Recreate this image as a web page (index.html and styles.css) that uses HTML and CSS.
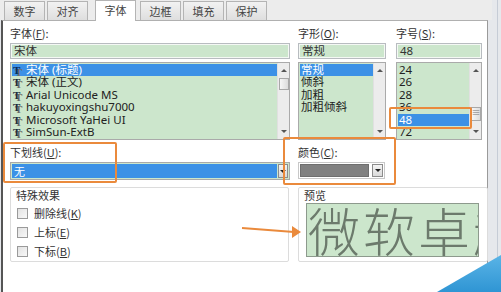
FILE: index.html
```html
<!DOCTYPE html>
<html lang="zh-CN">

<head>
    <meta charset="UTF-8">
    <title>设置单元格格式 - 字体</title>
    <link rel="stylesheet" href="styles.css">
</head>

<body>
    <div class="dialog">
        <nav class="tabs">
            <span class="tab">数字</span>
            <span class="tab">对齐</span>
            <span class="tab active">字体</span>
            <span class="tab">边框</span>
            <span class="tab">填充</span>
            <span class="tab">保护</span>
        </nav>

        <main class="panel">
            <section class="row-top">
                <div class="field">
                    <label class="label">字体(<u>F</u>):</label>
                    <div class="input">宋体</div>
                    <div class="list">
                        <ul class="items">
                            <li class="selected"><span class="tt">T</span>宋体 (标题)</li>
                            <li><span class="tt">T</span>宋体 (正文)</li>
                            <li><span class="tt">T</span>Arial Unicode MS</li>
                            <li><span class="tt">T</span>hakuyoxingshu7000</li>
                            <li><span class="tt">T</span>Microsoft YaHei UI</li>
                            <li><span class="tt">T</span>SimSun-ExtB</li>
                        </ul>
                        <div class="scroll">
                            <span class="arrow up"></span>
                            <span class="thumb thumb-font"></span>
                            <span class="arrow down"></span>
                        </div>
                    </div>
                </div>

                <div class="field">
                    <label class="label">字形(<u>O</u>):</label>
                    <div class="input">常规</div>
                    <div class="list">
                        <ul class="items">
                            <li class="selected">常规</li>
                            <li>倾斜</li>
                            <li>加粗</li>
                            <li>加粗倾斜</li>
                        </ul>
                        <div class="scroll">
                            <span class="arrow up"></span>
                            <span class="arrow down"></span>
                        </div>
                    </div>
                </div>

                <div class="field">
                    <label class="label">字号(<u>S</u>):</label>
                    <div class="input">48</div>
                    <div class="list">
                        <ul class="items">
                            <li>24</li>
                            <li>26</li>
                            <li>28</li>
                            <li>36</li>
                            <li class="selected">48</li>
                            <li>72</li>
                        </ul>
                        <div class="scroll">
                            <span class="arrow up"></span>
                            <span class="thumb thumb-size">≡</span>
                            <span class="arrow down"></span>
                        </div>
                    </div>
                </div>
            </section>

            <section class="row-mid">
                <div class="field">
                    <label class="label">下划线(<u>U</u>):</label>
                    <div class="combo">
                        <span class="combo-value">无</span>
                        <span class="combo-btn"></span>
                    </div>
                </div>
                <div class="field">
                    <label class="label">颜色(<u>C</u>):</label>
                    <div class="combo color">
                        <span class="swatch"></span>
                        <span class="combo-btn"></span>
                    </div>
                </div>
            </section>

            <section class="row-bottom">
                <fieldset class="group effects">
                    <legend class="group-title">特殊效果</legend>
                    <label class="check"><span class="box"></span><span>删除线(<u>K</u>)</span></label>
                    <label class="check"><span class="box"></span><span>上标(<u>E</u>)</span></label>
                    <label class="check"><span class="box"></span><span>下标(<u>B</u>)</span></label>
                </fieldset>
                <fieldset class="group preview">
                    <legend class="group-title">预览</legend>
                    <div class="sample">微软卓越</div>
                </fieldset>
            </section>
        </main>

        <div class="edge"></div>

        <!-- annotations drawn over the screenshot -->
        <span class="mark mark-size"></span>
        <span class="mark mark-underline"></span>
        <span class="mark mark-color"></span>
        <svg class="pointer" width="70" height="20" viewBox="0 0 70 20">
            <line x1="2" y1="6" x2="54" y2="10" stroke="#ea8a3c" stroke-width="2" />
            <polygon points="52,4 61,10 52,16" fill="#ea8a3c" />
        </svg>
        <span class="corner"></span>
    </div>
</body>

</html>
```

FILE: styles.css
```css
body {
    margin: 0;
    width: 501px;
    height: 292px;
    overflow: hidden;
    background: #e6e8ec;
    color: #2b2b2b;
    font-family: "Noto Sans", "Noto Sans CJK SC", sans-serif;
    font-size: 11px;
}

u {
    text-decoration: underline;
}

.dialog {
    position: relative;
    width: 501px;
    height: 292px;
    display: flex;
    flex-direction: column;
}

/* tabs */
.tabs {
    display: flex;
    gap: 2px;
    height: 20px;
    padding-left: 4px;
    background: #ececec;
    width: 488px;
    align-items: flex-end;
}

.tab {
    width: 41px;
    height: 19px;
    box-sizing: border-box;
    border: 1px solid #b4b4b4;
    border-bottom: none;
    background: linear-gradient(#f2f2f2, #dedede);
    text-align: center;
    line-height: 18px;
    color: #444;
    font-family: "Noto Sans CJK SC", sans-serif;
    font-size: 11px;
}

.tab.active {
    background: #fff;
    height: 21px;
    margin: 0 2px -1px 5px;
    position: relative;
}

/* panel */
.panel {
    width: 487px;
    flex: 1;
    margin-left: 1px;
    background: #fff;
    border-top: 1px solid #b0b0b0;
    border-left: 2px solid #555;
    border-right: 1px solid #9a9a9a;
    padding: 4px 0 0 7px;
    box-sizing: border-box;
    display: flex;
    flex-direction: column;
}

.edge {
    position: absolute;
    top: 0;
    right: 3px;
    width: 1px;
    height: 292px;
    background: #c6ccd6;
}

.row-top {
    display: grid;
    grid-template-columns: 280px 88px 88px;
    column-gap: 8px;
}

.row-top .field:last-child {
    margin-left: 2px;
}

.label {
    display: block;
    height: 18px;
    line-height: 17px;
    font-family: "Noto Sans CJK SC", sans-serif;
    font-size: 11px;
    color: #333;
}

.input {
    height: 16px;
    box-sizing: border-box;
    border: 1px solid #b8bcc0;
    background: #cce6cc;
    box-shadow: inset 0 0 0 1px #f4f8f4;
    padding-left: 3px;
    line-height: 14px;
    font-family: "Noto Sans", "Noto Sans CJK SC", sans-serif;
    font-size: 11.5px;
    color: #333;
}

.list {
    margin-top: 3px;
    height: 78px;
    box-sizing: border-box;
    border: 1px solid #aaa;
    background: #cce6cc;
    display: flex;
}

.items {
    flex: 1;
    list-style: none;
    margin: 0;
    padding: 1px 0 0 1px;
    overflow: hidden;
}

.items li {
    height: 12.4px;
    line-height: 12.4px;
    padding-left: 1px;
    white-space: nowrap;
    color: #222;
    font-family: "Noto Sans", "Noto Sans CJK SC", sans-serif;
    font-size: 11.5px;
}

.items li.selected {
    background: #3c91e6;
    color: #fff;
}

.tt {
    display: inline-block;
    width: 12px;
    font-family: "Liberation Serif", serif;
    font-weight: bold;
    font-size: 11px;
    color: #1d2b3a;
    text-shadow: 2px 2px 0 #6a6a6a;
    margin-right: 1px;
}

.selected .tt {
    color: #0b2a55;
}

.scroll {
    width: 11px;
    background: #ececec;
    border-left: 1px solid #e0e0e0;
    display: flex;
    flex-direction: column;
    align-items: center;
}

.arrow {
    width: 0;
    height: 0;
    border-left: 3px solid transparent;
    border-right: 3px solid transparent;
}

.arrow.up {
    margin-top: 6px;
    border-bottom: 3px solid #555;
}

.arrow.down {
    margin-top: auto;
    margin-bottom: 6px;
    border-top: 3px solid #555;
}

.thumb {
    width: 10px;
    height: 12px;
    box-sizing: border-box;
    border: 1px solid #a8a8a8;
    background: linear-gradient(90deg, #f6f6f6, #dcdcdc);
    font-size: 9px;
    line-height: 10px;
    text-align: center;
    color: #777;
}

.thumb-font {
    margin-top: 6px;
}

.thumb-size {
    margin-top: 35px;
    height: 14px;
}

/* underline / colour */
.row-mid {
    display: grid;
    grid-template-columns: 280px 88px;
    column-gap: 8px;
    margin-top: 4px;
}

.combo {
    height: 18px;
    box-sizing: border-box;
    border: 1px solid #a9a9a9;
    background: #cce6cc;
    display: flex;
    padding: 1px;
}

.combo-value {
    flex: 1;
    background: #3c91e6;
    color: #fff;
    line-height: 14px;
    padding-left: 2px;
    font-family: "Noto Sans CJK SC", sans-serif;
}

.combo-btn {
    width: 10px;
    margin-left: 1px;
    background: linear-gradient(#f4f4f4, #dadada);
    border: 1px solid #8c8c8c;
    box-sizing: border-box;
    display: flex;
    align-items: center;
    justify-content: center;
}

.combo-btn::after {
    content: "";
    border-left: 3px solid transparent;
    border-right: 3px solid transparent;
    border-top: 3px solid #222;
}

.combo.color {
    width: 87px;
    height: 17px;
    background: #fff;
    border-color: #c8c8c8;
}

.swatch {
    width: 70px;
    background: #808080;
    border: 1px solid #6e6e6e;
    box-sizing: border-box;
    margin-right: 2px;
}

.combo.color .combo-btn {
    width: 11px;
}

/* groups */
.row-bottom {
    display: grid;
    grid-template-columns: 279px 190px;
    column-gap: 9px;
    margin-top: 7px;
}

.group {
    margin: 0;
    height: 75px;
    box-sizing: border-box;
    border: 1px solid #dcdcdc;
    border-radius: 2px;
    padding: 0;
    position: relative;
}

.group-title {
    position: absolute;
    top: 0;
    left: 5px;
    padding: 0;
    line-height: 14px;
    font-family: "Noto Sans CJK SC", sans-serif;
    color: #333;
}

.effects {
    padding: 17px 0 0 6px;
    display: flex;
    flex-direction: column;
    gap: 3px;
}

.check {
    display: flex;
    align-items: center;
    gap: 6px;
    height: 16px;
    font-family: "Noto Sans CJK SC", sans-serif;
    color: #333;
}

.box {
    width: 11px;
    height: 11px;
    box-sizing: border-box;
    border: 1px solid #9a9a9a;
    background: linear-gradient(135deg, #e2e2e2, #f8f8f8);
}

.preview {
    padding: 15px 0 0 7px;
}

.sample {
    width: 173px;
    height: 54px;
    box-sizing: border-box;
    border: 1px solid #8d9a8d;
    background: #cce6cc;
    overflow: hidden;
    white-space: nowrap;
    padding-left: 1px;
    font-family: "Noto Sans CJK SC", sans-serif;
    font-weight: 200;
    font-size: 52px;
    line-height: 51px;
    letter-spacing: 3px;
    color: #6c7a6c;
}

/* annotations */
.mark {
    position: absolute;
    border: 2px solid #ea8a3c;
    border-radius: 2px;
    box-sizing: border-box;
}

.mark-size {
    left: 389px;
    top: 107px;
    width: 83px;
    height: 22px;
}

.mark-underline {
    left: 3px;
    top: 142px;
    width: 114px;
    height: 41px;
}

.mark-color {
    left: 283px;
    top: 137px;
    width: 113px;
    height: 48px;
}

.pointer {
    position: absolute;
    left: 240px;
    top: 222px;
}

.corner {
    position: absolute;
    left: 437px;
    top: 255px;
    width: 64px;
    height: 37px;
    background: linear-gradient(#5ab4e6, #2f95d4);
    clip-path: polygon(0 100%, 100% 0, 100% 100%);
}
```
